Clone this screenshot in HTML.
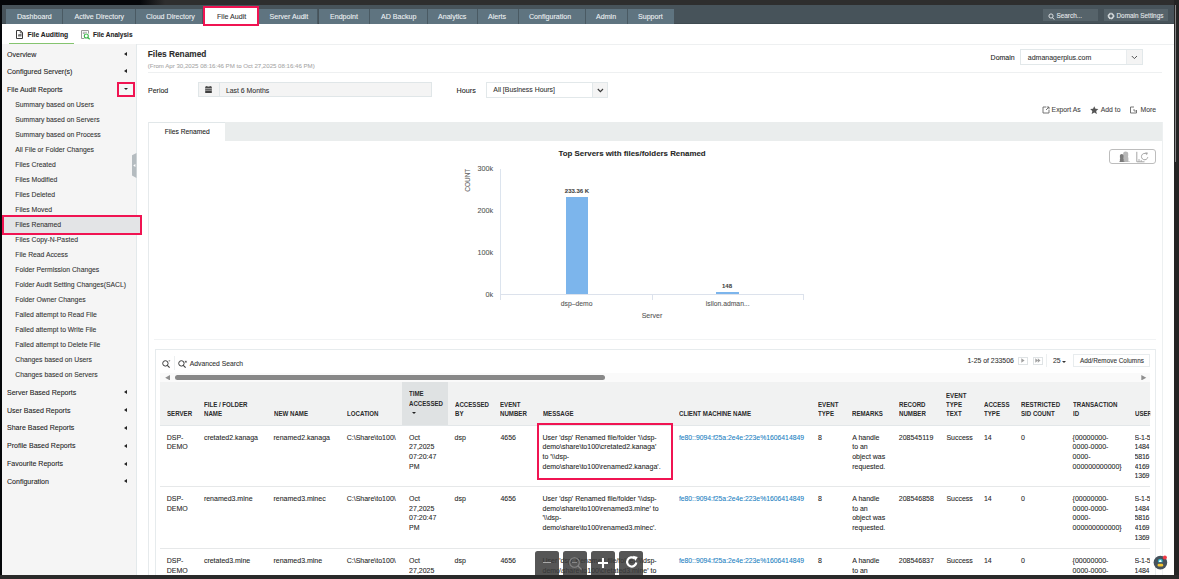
<!DOCTYPE html>
<html><head><meta charset="utf-8">
<style>
*{box-sizing:border-box;margin:0;padding:0}
html,body{width:1179px;height:579px;overflow:hidden;background:#2a2a2a;font-family:"Liberation Sans",sans-serif;color:#333}
.a{position:absolute;white-space:nowrap}
.t{position:absolute;white-space:nowrap;line-height:1;font-size:7px;-webkit-text-stroke:0.08px currentColor}
#top{left:0;top:0;width:1179px;height:5px;background:linear-gradient(90deg,#05070a 0,#05070a 140px,#2e2e2e 165px,#2e2e2e 100%)}
#lft{left:0;top:0;width:2px;height:579px;background:#05070a}
#app{left:2px;top:5px;width:1172px;height:570px;background:#fff;overflow:hidden}
#rgt{left:1174px;top:0;width:5px;height:579px;background:#242424}
#hdr{left:2px;top:5px;width:1172px;height:19px;background:#47535a;border-bottom:1px solid #3f4b51}
.tab{position:absolute;top:9px;height:14.6px;background:#5f7480;border-right:1px solid #4a5a63}
.tl{color:#eef2f4;font-size:7.1px;top:13.8px}
.sb{left:2px;top:44.3px;width:134.5px;height:531px;background:#f5f5f5;border-right:1px solid #e3e9eb}
.mi{font-size:7.05px;color:#222;left:7px}
.si{font-size:6.8px;color:#333;left:15.3px}
.arr{position:absolute;left:124px;width:0;height:0;border-top:2px solid transparent;border-bottom:2px solid transparent;border-right:3px solid #222}
.red{position:absolute;border:2.8px solid #f01452}
.bd{position:absolute;background:#e6eaec}
.hd{font-size:6.8px;font-weight:700;color:#2a2a2a;line-height:9px;transform:scaleX(0.9);transform-origin:0 0;-webkit-text-stroke:0}
.rc{font-size:7px;color:#262626;line-height:9.6px}
</style></head><body>
<div id="top" class="a"></div>
<div id="app" class="a"></div>
<div id="hdr" class="a"></div>
<!-- nav tabs -->
<div class="tab" style="left:6px;width:57px"></div><div class="t tl" style="left:17px">Dashboard</div>
<div class="tab" style="left:63px;width:72.5px"></div><div class="t tl" style="left:74.5px">Active Directory</div>
<div class="tab" style="left:135.5px;width:67.5px"></div><div class="t tl" style="left:146px">Cloud Directory</div>
<div class="a" style="left:203px;top:6.2px;width:56px;height:19.4px;background:#fff;border:2.8px solid #f01452"></div><div class="t" style="left:217px;top:13.8px;font-size:7.1px;color:#333">File Audit</div>
<div class="tab" style="left:259px;width:59px"></div><div class="t tl" style="left:269.5px">Server Audit</div>
<div class="tab" style="left:319px;width:51px"></div><div class="t tl" style="left:330px">Endpoint</div>
<div class="tab" style="left:370px;width:57.5px"></div><div class="t tl" style="left:381px">AD Backup</div>
<div class="tab" style="left:427.5px;width:50.5px"></div><div class="t tl" style="left:438px">Analytics</div>
<div class="tab" style="left:478px;width:40.5px"></div><div class="t tl" style="left:488px">Alerts</div>
<div class="tab" style="left:518.5px;width:67px"></div><div class="t tl" style="left:529px">Configuration</div>
<div class="tab" style="left:585.5px;width:42.5px"></div><div class="t tl" style="left:596px">Admin</div>
<div class="tab" style="left:628px;width:46px;border-right:none"></div><div class="t tl" style="left:638px">Support</div>
<!-- search + domain settings -->
<div class="a" style="left:1043.3px;top:9.1px;width:54.7px;height:11.5px;background:#56636a"></div>
<svg class="a" style="left:1047.5px;top:12.8px" width="7" height="8" viewBox="0 0 7 8"><circle cx="3" cy="3" r="2.1" fill="none" stroke="#e8ecee" stroke-width="0.9"/><path d="M4.5 4.6 L6.2 6.6" stroke="#e8ecee" stroke-width="1"/></svg>
<div class="t" style="left:1056.5px;top:12.6px;font-size:6.4px;color:#e6eaec">Search...</div>
<div class="a" style="left:1104px;top:9.1px;width:63.8px;height:11.5px;background:#56636a"></div>
<svg class="a" style="left:1107px;top:12px" width="8" height="8" viewBox="0 0 8 8"><circle cx="4" cy="4" r="2.3" fill="none" stroke="#e8ecee" stroke-width="1.1"/><circle cx="4" cy="4" r="3" fill="none" stroke="#e8ecee" stroke-width="0.8" stroke-dasharray="1 0.9"/></svg>
<div class="t" style="left:1116.5px;top:12.6px;font-size:6.4px;color:#e6eaec">Domain Settings</div>

<!-- sub header -->
<svg class="a" style="left:16px;top:30px" width="8" height="9" viewBox="0 0 8 9"><path d="M0.5 0.5 H4.6 L6.5 2.4 V8.5 H0.5 Z" fill="#fff" stroke="#3a3a3a" stroke-width="1"/><path d="M4.3 0.6 V2.7 H6.4" fill="none" stroke="#3a3a3a" stroke-width="0.8"/><path d="M2 4.6 L5.6 3.6 V6.6 H2 Z" fill="#777"/></svg>
<div class="t" style="left:27.6px;top:32.3px;font-size:6.75px;font-weight:700;color:#222">File Auditing</div>
<div class="a" style="left:9px;top:43px;width:65px;height:2px;background:#85c46f"></div>
<svg class="a" style="left:81px;top:30px" width="10" height="10" viewBox="0 0 10 10"><path d="M3.3 8.5 H0.5 V0.5 H7.5 V3.6" fill="none" stroke="#9a9a9a" stroke-width="1"/><path d="M1.8 2.3 H6 M1.8 3.5 H3.8" stroke="#a8a8a8" stroke-width="0.9"/><circle cx="5.3" cy="6" r="2" fill="none" stroke="#3cb54a" stroke-width="1.1"/><path d="M6.8 7.5 L8.7 9.2" stroke="#3cb54a" stroke-width="1.2"/></svg>
<div class="t" style="left:93px;top:32.3px;font-size:6.5px;font-weight:700;color:#222">File Analysis</div>

<!-- sidebar -->
<div class="a sb"></div>
<div class="t mi" style="top:50.5px">Overview</div><div class="arr" style="top:51.6px"></div>
<div class="t mi" style="top:67.9px">Configured Server(s)</div><div class="arr" style="top:69.4px"></div>
<div class="t mi" style="top:85.9px">File Audit Reports</div>
<div class="a" style="left:117.4px;top:81.6px;width:17.5px;height:15.2px;background:#f5f7f7;border:2.8px solid #f01452"></div>
<div class="a" style="left:124.2px;top:87.8px;width:0;height:0;border-left:2.5px solid transparent;border-right:2.5px solid transparent;border-top:2.5px solid #222"></div>

<div class="t si" style="top:101.8px">Summary based on Users</div>
<div class="t si" style="top:116.8px">Summary based on Servers</div>
<div class="t si" style="top:131.8px">Summary based on Process</div>
<div class="t si" style="top:146.8px">All File or Folder Changes</div>
<div class="t si" style="top:161.8px">Files Created</div>
<div class="t si" style="top:176.8px">Files Modified</div>
<div class="t si" style="top:191.8px">Files Deleted</div>
<div class="t si" style="top:206.8px">Files Moved</div>
<div class="a" style="left:2px;top:215.3px;width:139.6px;height:20.2px;background:#e3e4e6;border:2.8px solid #f01452"></div>
<div class="t si" style="top:221.8px">Files Renamed</div>
<div class="t si" style="top:236.8px">Files Copy-N-Pasted</div>
<div class="t si" style="top:251.8px">File Read Access</div>
<div class="t si" style="top:266.8px">Folder Permission Changes</div>
<div class="t si" style="top:281.8px">Folder Audit Setting Changes(SACL)</div>
<div class="t si" style="top:296.8px">Folder Owner Changes</div>
<div class="t si" style="top:311.8px">Failed attempt to Read File</div>
<div class="t si" style="top:326.8px">Failed attempt to Write File</div>
<div class="t si" style="top:341.8px">Failed attempt to Delete File</div>
<div class="t si" style="top:356.8px">Changes based on Users</div>
<div class="t si" style="top:371.8px">Changes based on Servers</div>

<div class="t mi" style="top:388.6px">Server Based Reports</div><div class="arr" style="top:390px"></div>
<div class="t mi" style="top:406.5px">User Based Reports</div><div class="arr" style="top:407.9px"></div>
<div class="t mi" style="top:424.4px">Share Based Reports</div><div class="arr" style="top:425.8px"></div>
<div class="t mi" style="top:442.2px">Profile Based Reports</div><div class="arr" style="top:443.6px"></div>
<div class="t mi" style="top:460.1px">Favourite Reports</div><div class="arr" style="top:461.5px"></div>
<div class="t mi" style="top:478.0px">Configuration</div><div class="arr" style="top:479.4px"></div>
<!-- collapse handle -->
<svg class="a" style="left:132px;top:152.8px" width="4.5" height="25" viewBox="0 0 4.5 25"><path d="M0 2.2 L4.5 0 V25 L0 22.6 Z" fill="#b5bcc0"/><path d="M1.2 12.4 L3.4 10.9 V13.9 Z" fill="#fff"/></svg>
<!-- content header -->
<div class="a" style="left:137px;top:44px;width:1037px;height:1px;background:#eef0f1"></div>
<div class="t" style="left:147.8px;top:50.1px;font-size:8.3px;font-weight:700;color:#2b2b2b">Files Renamed</div>
<div class="t" style="left:147.7px;top:62.6px;font-size:6.1px;color:#a9a9a9">(From Apr 30,2025 08:16:46 PM to Oct 27,2025 08:16:46 PM)</div>
<div class="bd" style="left:148px;top:72px;width:1014px;height:1px;background:#eef0f1"></div>
<div class="t" style="left:990.6px;top:54.2px;font-size:7px;color:#222">Domain</div>
<div class="a" style="left:1020px;top:49.3px;width:122.6px;height:15.9px;background:#fff;border:1px solid #e2e8ea"></div>
<div class="a" style="left:1126.2px;top:50.3px;width:15.4px;height:13.9px;background:#f4f4f4;border-left:1px solid #e8ecee"></div>
<svg class="a" style="left:1130.8px;top:55.3px" width="7" height="5" viewBox="0 0 7 5"><path d="M0.8 1 L3.4 3.6 L6 1" fill="none" stroke="#555" stroke-width="1"/></svg>
<div class="t" style="left:1027.8px;top:54.4px;font-size:7px;color:#333">admanagerplus.com</div>

<div class="t" style="left:148px;top:86.7px;font-size:7px;color:#222">Period</div>
<div class="a" style="left:198px;top:82.1px;width:234.2px;height:14.6px;background:#f4f4f4;border:1px solid #e0e6e8"></div>
<div class="a" style="left:218.5px;top:83px;width:1px;height:13px;background:#e0e6e8"></div>
<svg class="a" style="left:204.5px;top:85.8px" width="7" height="7.4" viewBox="0 0 7 7.4"><rect x="0.2" y="0.6" width="6.6" height="6.6" fill="#3f3f3f"/><rect x="1.3" y="0" width="1" height="1.4" fill="#3f3f3f"/><rect x="4.7" y="0" width="1" height="1.4" fill="#3f3f3f"/><path d="M0.2 2.4 H6.8 M0.2 4.2 H6.8" stroke="#f4f4f4" stroke-width="0.6"/></svg>
<div class="t" style="left:225.9px;top:87.8px;font-size:6.9px;color:#333">Last 6 Months</div>
<div class="t" style="left:456.6px;top:86.7px;font-size:7.2px;color:#222">Hours</div>
<div class="a" style="left:486px;top:82.2px;width:121.8px;height:15.4px;background:#fff;border:1px solid #e2e8ea"></div>
<div class="a" style="left:592px;top:83.2px;width:14.8px;height:13.4px;background:#f4f4f4;border-left:1px solid #e2e8ea"></div>
<svg class="a" style="left:596.8px;top:88px" width="7" height="5" viewBox="0 0 7 5"><path d="M0.8 1 L3.4 3.6 L6 1" fill="none" stroke="#3a3a3a" stroke-width="1.2"/></svg>
<div class="t" style="left:493.3px;top:87.2px;font-size:6.9px;color:#333">All [Business Hours]</div>

<svg class="a" style="left:1041.5px;top:105.5px" width="8" height="8" viewBox="0 0 8 8"><path d="M4 1 H1 V7 H7 V4" fill="none" stroke="#666" stroke-width="0.9"/><path d="M4 4 L7 1 M4.6 1 H7 V3.4" fill="none" stroke="#666" stroke-width="0.9"/></svg>
<div class="t" style="left:1051.6px;top:106.6px;font-size:6.8px;color:#444">Export As</div>
<svg class="a" style="left:1090.3px;top:105.6px" width="8.5" height="8.5" viewBox="0 0 8 8"><path d="M4 0.2 L5.15 2.7 L7.9 2.9 L5.8 4.75 L6.45 7.6 L4 6.15 L1.55 7.6 L2.2 4.75 L0.1 2.9 L2.85 2.7 Z" fill="#555"/></svg>
<div class="t" style="left:1100.8px;top:106.6px;font-size:6.8px;color:#444">Add to</div>
<svg class="a" style="left:1130.3px;top:106px" width="7" height="8" viewBox="0 0 7 8"><path d="M0.5 1 H4 M0.5 1 V7 H6.5 V4" fill="none" stroke="#666" stroke-width="0.9"/><path d="M3 4 H5 V6" fill="none" stroke="#666" stroke-width="0.8"/></svg>
<div class="t" style="left:1140.5px;top:106.6px;font-size:6.8px;color:#444">More</div>

<!-- report container -->
<div class="bd" style="left:148px;top:122.2px;width:1px;height:453px"></div>
<div class="bd" style="left:1162px;top:122.2px;width:1px;height:453px;background:#edf0f1"></div>
<div class="a" style="left:149px;top:122.2px;width:1013px;height:18.6px;background:#eaeded"></div>
<div class="a" style="left:149px;top:122.2px;width:76px;height:18.6px;background:#fff;border-top:1px solid #e1e7e9"></div>
<div class="t" style="left:164.7px;top:129.3px;font-size:6.7px;color:#222">Files Renamed</div>


<!-- chart -->
<div class="t" style="left:558.5px;top:149.9px;font-size:7.9px;font-weight:700;color:#262626">Top Servers with files/folders Renamed</div>
<div class="t" style="left:455.7px;top:177.2px;font-size:6.5px;color:#666;transform:rotate(-90deg);transform-origin:center;width:24px;text-align:center">COUNT</div>
<div class="t" style="left:470px;width:23px;text-align:right;top:165.2px;font-size:7.2px;color:#555">300k</div>
<div class="t" style="left:470px;width:23px;text-align:right;top:207.2px;font-size:7.2px;color:#555">200k</div>
<div class="t" style="left:470px;width:23px;text-align:right;top:249.2px;font-size:7.2px;color:#555">100k</div>
<div class="t" style="left:470px;width:23px;text-align:right;top:291.2px;font-size:7.2px;color:#555">0k</div>
<div class="a" style="left:500px;top:169px;width:1px;height:125.5px;background:#dce4ee"></div>
<div class="a" style="left:500px;top:294px;width:304px;height:1px;background:#dce2ec"></div>
<div class="a" style="left:500px;top:294px;width:1px;height:6px;background:#dce2ec"></div>
<div class="a" style="left:652px;top:294px;width:1px;height:6px;background:#dce2ec"></div>
<div class="a" style="left:803px;top:294px;width:1px;height:6px;background:#dce2ec"></div>
<div class="a" style="left:565.6px;top:197.1px;width:22.5px;height:97px;background:#7cb5ec"></div>
<div class="a" style="left:716px;top:292.2px;width:22.6px;height:2px;background:#7cb5ec"></div>
<div class="t" style="left:557px;width:40px;text-align:center;top:188.3px;font-size:6px;font-weight:700;color:#444">233.36 K</div>
<div class="t" style="left:707px;width:40px;text-align:center;top:283.4px;font-size:6px;font-weight:700;color:#444">148</div>
<div class="t" style="left:546.7px;width:60px;text-align:center;top:301px;font-size:6.8px;color:#555">dsp–demo</div>
<div class="t" style="left:697.7px;width:60px;text-align:center;top:301px;font-size:6.8px;color:#555">isilon.adman...</div>
<div class="t" style="left:622px;width:60px;text-align:center;top:312.3px;font-size:7px;color:#555">Server</div>
<div class="a" style="left:1109.2px;top:149.2px;width:46.5px;height:15.2px;border:1px solid #bdbdbd;border-radius:3px;background:#fff"></div>
<svg class="a" style="left:1118.5px;top:151px" width="12" height="12" viewBox="0 0 12 12"><path d="M4.2 2.2 Q4.2 0.5 6.6 0.5 Q9.2 0.5 9.2 2.2 V5 Q8.6 6 9.4 6.8 V10.6 H11 V11 H4.2 Z" fill="#b8b8b8"/><path d="M0.9 4.5 Q0.9 3 2.7 3 Q4.6 3 4.6 4.5 V6.6 Q4 7.3 4.7 8 V10.6 H5.6 V11 H0.2 V10.6 H0.9 V8 Q1.5 7.3 0.9 6.6 Z" fill="#7a7a7a"/></svg>
<svg class="a" style="left:1136px;top:151px" width="14" height="12" viewBox="0 0 14 12"><path d="M0.8 0.8 V10.8 H8.5" fill="none" stroke="#a5a5a5" stroke-width="1"/><path d="M3 8 V10.8 M5.2 9 V10.8" stroke="#a5a5a5" stroke-width="0.9"/><path d="M11.8 6.2 A3.2 3.2 0 1 1 10.4 2.9" fill="none" stroke="#a5a5a5" stroke-width="1"/><path d="M9.2 1.2 L12 1.8 L10.8 4.2 Z" fill="#a5a5a5"/></svg>
<div class="a" style="left:154px;top:339px;width:1002px;height:1px;background:#f1f3f4"></div>

<!--TABLE-->
<div class="bd" style="left:154.5px;top:349.2px;width:1001.5px;height:1px;background:#e6ebed"></div>
<div class="bd" style="left:154.5px;top:349.2px;width:1px;height:226px;background:#e6ebed"></div>
<div class="bd" style="left:1155px;top:349.2px;width:1px;height:226px;background:#e8ecee"></div>
<svg class="a" style="left:161.5px;top:359.8px" width="9" height="8" viewBox="0 0 9 8"><circle cx="3.4" cy="3.4" r="2.7" fill="none" stroke="#3a3a3a" stroke-width="1"/><path d="M5.3 5.3 L7.6 7.6" stroke="#3a3a3a" stroke-width="1.1"/><path d="M6.6 0.4 L7.9 0.4 L7 1.8" fill="none" stroke="#666" stroke-width="0.6"/></svg>
<div class="a" style="left:174.2px;top:356.4px;width:1px;height:13.3px;background:#eceff0"></div>
<svg class="a" style="left:177.6px;top:359.8px" width="10" height="8" viewBox="0 0 10 8"><circle cx="3.4" cy="3.4" r="2.7" fill="none" stroke="#3a3a3a" stroke-width="1"/><path d="M5.3 5.3 L7.6 7.6" stroke="#3a3a3a" stroke-width="1.1"/><path d="M7.8 0.6 V2.8 M6.7 1.7 H8.9 M7 0.9 L8.6 2.5 M8.6 0.9 L7 2.5" stroke="#444" stroke-width="0.5"/></svg>
<div class="t" style="left:189.8px;top:361.1px;font-size:6.75px;color:#333">Advanced Search</div>
<div class="t" style="left:967.5px;top:358.4px;font-size:6.9px;color:#333">1-25 of 233506</div>
<div class="a" style="left:1018px;top:356.5px;width:9.7px;height:8.7px;border:1px solid #dfe3e5;background:#fff"></div>
<svg class="a" style="left:1021.2px;top:358.3px" width="4" height="5" viewBox="0 0 4 5"><path d="M0.3 0.3 L3.6 2.5 L0.3 4.7 Z" fill="#a0a0a0"/></svg>
<div class="a" style="left:1033.1px;top:356.5px;width:9.7px;height:8.7px;border:1px solid #dfe3e5;background:#fff"></div>
<svg class="a" style="left:1035.2px;top:358.3px" width="6" height="5" viewBox="0 0 6 5"><path d="M0.3 0.3 L3 2.5 L0.3 4.7 Z M2.8 0.3 L5.5 2.5 L2.8 4.7 Z" fill="#a0a0a0"/></svg>
<div class="a" style="left:1045.7px;top:354px;width:1px;height:13px;background:#eceff0"></div>
<div class="t" style="left:1053px;top:358.4px;font-size:6.9px;color:#333">25</div>
<div class="a" style="left:1062.2px;top:360.8px;width:0;height:0;border-left:2px solid transparent;border-right:2px solid transparent;border-top:2.2px solid #333"></div>
<div class="a" style="left:1073.3px;top:353.6px;width:76.3px;height:13.2px;border:1px solid #e8ecee;background:#fff"></div>
<div class="t" style="left:1080px;top:358.1px;font-size:6.4px;color:#333">Add/Remove Columns</div>
<div class="a" style="left:160px;top:373px;width:990px;height:9px;background:#fafafa"></div>
<svg class="a" style="left:164.8px;top:374.8px" width="5.5" height="5.5" viewBox="0 0 5.5 5.5"><path d="M0.2 2.75 L5.2 0 V5.5 Z" fill="#8f8f8f"/></svg>
<div class="a" style="left:174.6px;top:374.8px;width:430.4px;height:5.2px;background:#888;border-radius:2.6px"></div>
<svg class="a" style="left:1141px;top:374.8px" width="5.5" height="5.5" viewBox="0 0 5.5 5.5"><path d="M5.3 2.75 L0.3 0 V5.5 Z" fill="#8f8f8f"/></svg>
<div class="a" style="left:160px;top:382px;width:990px;height:44px;background:#f1f2f2;border-bottom:1px solid #e3e7e9"></div>
<div class="a" style="left:402px;top:382px;width:46px;height:44px;background:#dfe2e3;border-bottom:1px solid #e3e7e9"></div>
<div class="t hd" style="left:166.7px;top:408.75px">SERVER</div>
<div class="t hd" style="left:203.9px;top:399.75px">FILE / FOLDER<br>NAME</div>
<div class="t hd" style="left:273.5px;top:408.75px">NEW NAME</div>
<div class="t hd" style="left:346.7px;top:408.75px">LOCATION</div>
<div class="t hd" style="left:409.1px;top:388.95px;line-height:9.7px">TIME<br>ACCESSED</div>
<div class="a" style="left:411.8px;top:412.1px;width:0;height:0;border-left:2.3px solid transparent;border-right:2.3px solid transparent;border-top:2.6px solid #222"></div>
<div class="t hd" style="left:454.5px;top:399.75px">ACCESSED<br>BY</div>
<div class="t hd" style="left:500.4px;top:399.75px">EVENT<br>NUMBER</div>
<div class="t hd" style="left:542.5px;top:408.75px">MESSAGE</div>
<div class="t hd" style="left:678.9px;top:408.75px">CLIENT MACHINE NAME</div>
<div class="t hd" style="left:818px;top:399.75px">EVENT<br>TYPE</div>
<div class="t hd" style="left:852.2px;top:408.75px">REMARKS</div>
<div class="t hd" style="left:898.8px;top:399.75px">RECORD<br>NUMBER</div>
<div class="t hd" style="left:946.4px;top:390.75px">EVENT<br>TYPE<br>TEXT</div>
<div class="t hd" style="left:983.9px;top:399.75px">ACCESS<br>TYPE</div>
<div class="t hd" style="left:1021.1px;top:399.75px">RESTRICTED<br>SID COUNT</div>
<div class="t hd" style="left:1072.6px;top:399.75px">TRANSACTION<br>ID</div>
<div class="t hd" style="left:1134.6px;top:408.75px;width:16.9px;overflow:hidden">USER</div>
<div class="t rc" style="left:166.7px;top:432.80px">DSP-<br>DEMO</div>
<div class="t rc" style="left:203.9px;top:432.80px">cretated2.kanaga</div>
<div class="t rc" style="left:273.5px;top:432.80px">renamed2.kanaga</div>
<div class="t rc" style="left:346.7px;top:432.80px">C:\Share\to100\</div>
<div class="t rc" style="left:409.1px;top:432.80px">Oct<br>27,2025<br>07:20:47<br>PM</div>
<div class="t rc" style="left:454.5px;top:432.80px">dsp</div>
<div class="t rc" style="left:500.4px;top:432.80px">4656</div>
<div class="t rc" style="left:542.5px;top:432.80px">User &#x27;dsp&#x27; Renamed file/folder &#x27;\\dsp-<br>demo\share\to100\cretated2.kanaga&#x27;<br>to &#x27;\\dsp-<br>demo\share\to100\renamed2.kanaga&#x27;.</div>
<div class="t rc" style="left:678.9px;top:432.80px;color:#1b7fc2;font-size:6.8px">fe80::9094:f25a:2e4e:223e%1606414849</div>
<div class="t rc" style="left:818px;top:432.80px">8</div>
<div class="t rc" style="left:852.2px;top:432.80px">A handle<br>to an<br>object was<br>requested.</div>
<div class="t rc" style="left:898.8px;top:432.80px">208545119</div>
<div class="t rc" style="left:946.4px;top:432.80px">Success</div>
<div class="t rc" style="left:983.9px;top:432.80px">14</div>
<div class="t rc" style="left:1021.1px;top:432.80px">0</div>
<div class="t rc" style="left:1072.6px;top:432.80px">{00000000-<br>0000-0000-<br>0000-<br>000000000000}</div>
<div class="t rc" style="left:1134.6px;top:432.80px;width:15.2px;overflow:hidden;letter-spacing:-0.25px">S-1-5<br>1484<br>5816<br>4169<br>1369</div>
<div class="t rc" style="left:166.7px;top:494.30px">DSP-<br>DEMO</div>
<div class="t rc" style="left:203.9px;top:494.30px">renamed3.mine</div>
<div class="t rc" style="left:273.5px;top:494.30px">renamed3.minec</div>
<div class="t rc" style="left:346.7px;top:494.30px">C:\Share\to100\</div>
<div class="t rc" style="left:409.1px;top:494.30px">Oct<br>27,2025<br>07:20:47<br>PM</div>
<div class="t rc" style="left:454.5px;top:494.30px">dsp</div>
<div class="t rc" style="left:500.4px;top:494.30px">4656</div>
<div class="t rc" style="left:542.5px;top:494.30px">User &#x27;dsp&#x27; Renamed file/folder &#x27;\\dsp-<br>demo\share\to100\renamed3.mine&#x27; to<br>&#x27;\\dsp-<br>demo\share\to100\renamed3.minec&#x27;.</div>
<div class="t rc" style="left:678.9px;top:494.30px;color:#1b7fc2;font-size:6.8px">fe80::9094:f25a:2e4e:223e%1606414849</div>
<div class="t rc" style="left:818px;top:494.30px">8</div>
<div class="t rc" style="left:852.2px;top:494.30px">A handle<br>to an<br>object was<br>requested.</div>
<div class="t rc" style="left:898.8px;top:494.30px">208546858</div>
<div class="t rc" style="left:946.4px;top:494.30px">Success</div>
<div class="t rc" style="left:983.9px;top:494.30px">14</div>
<div class="t rc" style="left:1021.1px;top:494.30px">0</div>
<div class="t rc" style="left:1072.6px;top:494.30px">{00000000-<br>0000-0000-<br>0000-<br>000000000000}</div>
<div class="t rc" style="left:1134.6px;top:494.30px;width:15.2px;overflow:hidden;letter-spacing:-0.25px">S-1-5<br>1484<br>5816<br>4169<br>1369</div>
<div class="t rc" style="left:166.7px;top:556.00px">DSP-<br>DEMO</div>
<div class="t rc" style="left:203.9px;top:556.00px">cretated3.mine</div>
<div class="t rc" style="left:273.5px;top:556.00px">renamed3.mine</div>
<div class="t rc" style="left:346.7px;top:556.00px">C:\Share\to100\</div>
<div class="t rc" style="left:409.1px;top:556.00px">Oct<br>27,2025<br>07:20:47<br>PM</div>
<div class="t rc" style="left:454.5px;top:556.00px">dsp</div>
<div class="t rc" style="left:500.4px;top:556.00px">4656</div>
<div class="t rc" style="left:542.5px;top:556.00px">User &#x27;dsp&#x27; Renamed file/folder &#x27;\\dsp-<br>demo\share\to100\cretated3.mine&#x27; to<br>&#x27;\\dsp-<br>demo\share\to100\renamed3.mine&#x27;.</div>
<div class="t rc" style="left:678.9px;top:556.00px;color:#1b7fc2;font-size:6.8px">fe80::9094:f25a:2e4e:223e%1606414849</div>
<div class="t rc" style="left:818px;top:556.00px">8</div>
<div class="t rc" style="left:852.2px;top:556.00px">A handle<br>to an<br>object was<br>requested.</div>
<div class="t rc" style="left:898.8px;top:556.00px">208546837</div>
<div class="t rc" style="left:946.4px;top:556.00px">Success</div>
<div class="t rc" style="left:983.9px;top:556.00px">14</div>
<div class="t rc" style="left:1021.1px;top:556.00px">0</div>
<div class="t rc" style="left:1072.6px;top:556.00px">{00000000-<br>0000-0000-<br>0000-<br>000000000000}</div>
<div class="t rc" style="left:1134.6px;top:556.00px;width:15.2px;overflow:hidden;letter-spacing:-0.25px">S-1-5<br>1484<br>5816<br>4169<br>1369</div>
<div class="a" style="left:160px;top:486.1px;width:990px;height:1px;background:#e6e8e9"></div>
<div class="a" style="left:160px;top:548.2px;width:990px;height:1px;background:#e6e8e9"></div>
<div class="a" style="left:536.5px;top:423.4px;width:136.2px;height:56.6px;border:2.8px solid #f01452"></div>
<!--/TABLE-->

<!-- floating toolbar -->
<div class="a" style="left:535.3px;top:551px;width:23.3px;height:26px;background:rgba(58,58,58,0.86);border-radius:2.5px"></div>
<div class="a" style="left:563.2px;top:551px;width:23.5px;height:26px;background:rgba(58,58,58,0.86);border-radius:2.5px"></div>
<div class="a" style="left:591.3px;top:551px;width:23.4px;height:26px;background:rgba(58,58,58,0.86);border-radius:2.5px"></div>
<div class="a" style="left:619.2px;top:551px;width:23.7px;height:26px;background:rgba(58,58,58,0.86);border-radius:2.5px"></div>
<div class="a" style="left:542.5px;top:561.5px;width:8.5px;height:1.6px;background:#aaa"></div>
<svg class="a" style="left:567.5px;top:555.5px" width="15" height="15" viewBox="0 0 15 15"><circle cx="6.5" cy="6.5" r="4.8" fill="none" stroke="#888" stroke-width="1.1"/><path d="M4 6.5 H9" stroke="#888" stroke-width="1.1"/><path d="M10 10 L13.5 13.5" stroke="#888" stroke-width="1.3"/></svg>
<svg class="a" style="left:597px;top:557.3px" width="12" height="12" viewBox="0 0 12 12"><path d="M6 1 V11 M1 6 H11" stroke="#fff" stroke-width="2.1"/></svg>
<svg class="a" style="left:624.5px;top:555px" width="14" height="14" viewBox="0 0 14 14"><path d="M11.3 7.5 A4.6 4.6 0 1 1 9.6 3.3" fill="none" stroke="#fff" stroke-width="2.2"/><path d="M8 0.8 L12.8 2 L10.2 6 Z" fill="#fff"/></svg>
<!-- chat bubble -->
<svg class="a" style="left:1152.5px;top:555px" width="15" height="15" viewBox="0 0 15 15"><circle cx="7.4" cy="7.6" r="6.8" fill="#46525c"/><path d="M5 7.2 V5.6 Q5 3.8 7.3 3.8 Q9.6 3.8 9.6 5.6 V7.2 Z" fill="#2fb3c6"/><path d="M6.1 7 V5.8 L7.3 4.9 L8.5 5.8 V7 Z" fill="#fff"/><rect x="4.6" y="8.8" width="5.6" height="2.6" rx="1.2" fill="#f3c431"/><circle cx="11.9" cy="2.5" r="2" fill="#f03a46"/></svg>
<div id="lft" class="a"></div>
<div id="rgt" class="a"></div>
<div class="a" style="left:1174.6px;top:5px;width:1.4px;height:156.5px;background:#888;border-radius:0 0 1px 1px"></div>
<div class="a" style="left:0;top:575px;width:1179px;height:4px;background:#2a2a2a"></div>
</body></html>
